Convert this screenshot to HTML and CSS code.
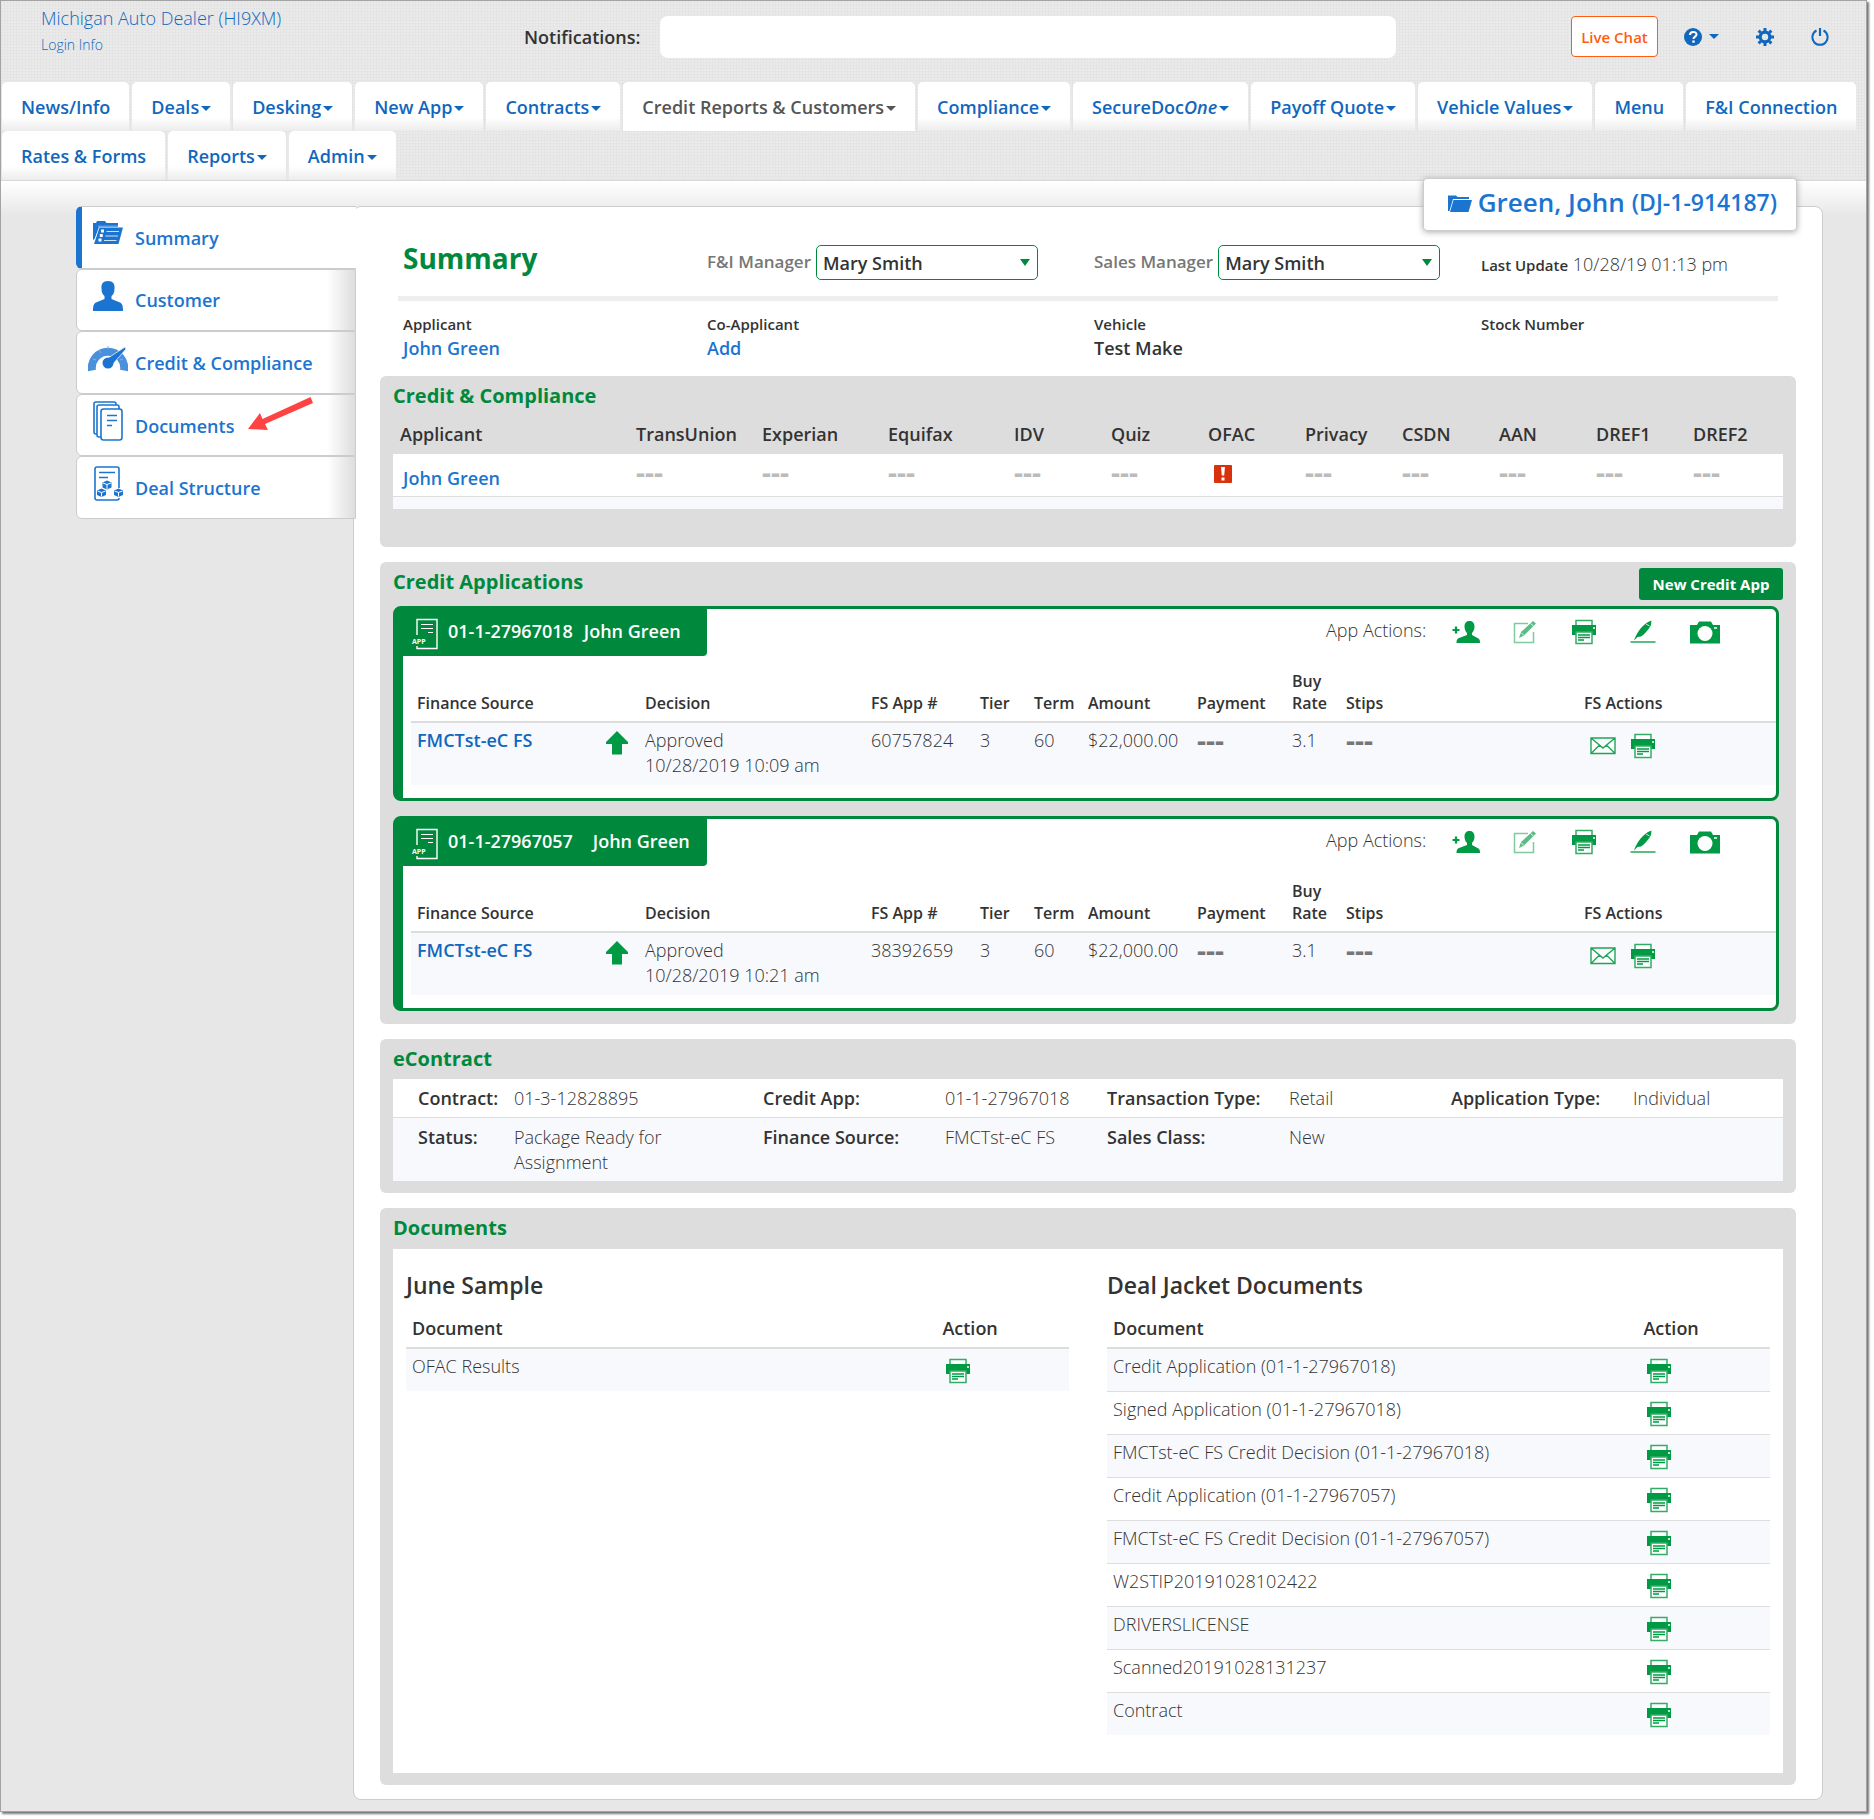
FILE: index.html
```html
<!DOCTYPE html>
<html lang="en">
<head>
  <meta charset="UTF-8">
  <title>Deal Jacket - Summary</title>
  <link rel="stylesheet" href="styles.css">
</head>
<body>
  <!-- Icon set -->
  <svg class="sprite" aria-hidden="true">
    <symbol id="i-printer" viewBox="0 0 26 26">
      <path d="M5 7V1.500h16V7" fill="#fff" stroke="#33ad66" stroke-width="1.500"/>
      <path d="M1 6h24v10h-4v-3H5v3H1z" fill="#009a44"/>
      <path d="M22 8h2v2h-2z" fill="#bfe6cf"/>
      <path d="M5 13h16v11.500H5z" fill="#fff" stroke="#33ad66" stroke-width="1.500"/>
      <path d="M7 16h12M7 18.500h12M7 21h6" stroke="#009a44" stroke-width="1.300"/>
    </symbol>
    <symbol id="i-adduser" viewBox="0 0 28 24">
      <path d="M17.500 1c-3 0-5 2-5 5.500 0 3 1 5 2.500 6.500v2L7 18c-2 1-2.500 2-2.500 5H28c0-3-.5-4-2.500-5l-5.500-3v-2c1.500-1.500 2.500-3.500 2.500-6.500C22.500 3 20.500 1 17.500 1z" fill="#009a44"/>
      <path d="M4 6.500v7M.5 10h7" stroke="#009a44" stroke-width="2.200"/>
    </symbol>
    <symbol id="i-edit" viewBox="0 0 24 24">
      <path d="M15 3.500H1.500v19h19V12" fill="none" stroke="#7fcb9f" stroke-width="1.500"/>
      <path d="M6 18l2-6L20 1l3 2.500L11 15.500z" fill="#5cbc85"/>
      <path d="M8 12.500l3 3M17.500 3.500l3 2.500" stroke="#fff" stroke-width=".8"/>
    </symbol>
    <symbol id="i-sign" viewBox="0 0 26 24">
      <path d="M.5 22h25" stroke="#33ad66" stroke-width="1.600"/>
      <path d="M4 20.500C6 15 10 7 18 2l3.500-1.500L21 5c-2 4-6 9-10 11.500l-3.500.5z" fill="#009a44"/>
      <path d="M16 4l3.500 2" stroke="#fff" stroke-width=".8" fill="none"/>
    </symbol>
    <symbol id="i-camera" viewBox="0 0 30 23">
      <path d="M0 4h7l2-3.500h12L23 4h7v18.500H0z" fill="#009a44"/>
      <circle cx="15" cy="12.500" r="7.500" fill="#fff"/>
      <path d="M24 7h3" stroke="#fff" stroke-width="1.500"/>
    </symbol>
    <symbol id="i-mail" viewBox="0 0 26 18">
      <path d="M1 1h24v15.500H1zM1 1l12 10L25 1M1 16.500L9.500 8M25 16.500L16.500 8" fill="#fff" stroke="#1fa558" stroke-width="1.400"/>
    </symbol>
    <symbol id="i-up" viewBox="0 0 22 24">
      <path d="M11 0l11 11v2h-6v10.500H6V13H0v-2z" fill="#009a44"/>
    </symbol>
    <symbol id="i-app" viewBox="0 0 28 32">
      <path d="M6 17V1.500h20v29H6V28" fill="none" stroke="#fff" stroke-width="1.400"/>
      <path d="M10 6.500h12M10 10.500h12M17 14.500h5" stroke="#fff" stroke-width="1.200"/>
      <text x="1" y="26" fill="#fff" font-size="7" font-weight="700">APP</text>
    </symbol>
    <symbol id="i-alert" viewBox="0 0 18 18">
      <rect width="18" height="18" rx="1" fill="#d9310b"/>
      <path d="M7 2h4l-.8 8.500H7.800zM7.500 12.500h3v3h-3z" fill="#fff"/>
    </symbol>
    <symbol id="i-folder" viewBox="0 0 24 18">
      <path d="M0 17V1.500h8L9.500 3H21v2H5L1.500 17z" fill="#1b75d0"/>
      <path d="M5.500 6H24l-3.500 12H2z" fill="#1b75d0"/>
    </symbol>
    <symbol id="i-help" viewBox="0 0 18 18">
      <circle cx="9" cy="9" r="9" fill="#1167bd"/>
      <path d="M6 7c0-4 6.500-4 6.500-.5 0 2.200-3 2-3 4.500" fill="none" stroke="#fff" stroke-width="2"/>
      <path d="M8.300 12.500h2.400v2.200H8.300z" fill="#fff"/>
    </symbol>
    <symbol id="i-gear" viewBox="0 0 18 18">
      <circle cx="9" cy="9" r="4.800" fill="none" stroke="#1167bd" stroke-width="3.200"/>
      <path d="M9 0v3M9 15v3M0 9h3M15 9h3M2.600 2.600l2.200 2.200M13.200 13.200l2.200 2.200M15.400 2.600l-2.200 2.200M4.800 13.200l-2.200 2.200" stroke="#1167bd" stroke-width="3"/>
    </symbol>
    <symbol id="i-power" viewBox="0 0 18 18">
      <path d="M5.500 2.500a7.600 7.600 0 1 0 7 0" fill="none" stroke="#1167bd" stroke-width="2"/>
      <path d="M9 0v8" stroke="#1167bd" stroke-width="2.200"/>
    </symbol>
    <symbol id="i-summary" viewBox="0 0 32 24">
      <path d="M1 19V2h3l1-2h8l1.500 2H26v4H7L2.500 18z" fill="#1b75d0"/>
      <path d="M7.500 6.500H31L26.500 23H2z" fill="#1b75d0"/>
      <path d="M6 5.200h20" stroke="#8dbae7" stroke-width="1"/>
      <path d="M9 10h3M7.800 14.500h3M6.500 19h3" stroke="#fff" stroke-width="3"/>
      <path d="M14.500 10.500H27M13.300 15H26M12 19.500h12.500" stroke="#cfe2f5" stroke-width="1.200"/>
    </symbol>
    <symbol id="i-user" viewBox="0 0 30 30">
      <path d="M15 0c-5 0-7 3-6.500 7.500C8.500 11 9.500 13.500 11.500 15v3L3 21.500C.5 23 0 25 0 30h30c0-5-.5-7-3-8.500L18.500 18v-3c2-1.500 3-4 3-7.500C22 3 20 0 15 0z" fill="#1b75d0"/>
    </symbol>
    <symbol id="i-gauge" viewBox="0 0 40 30">
      <path d="M4 27.500A16.200 16.200 0 1 1 36 27.500" fill="none" stroke="#4a90db" stroke-width="8"/>
      <path d="M5 16l3 1M11 7l2 3M20 3v3M35 16l-3 1" stroke="#7fb1e6" stroke-width="1"/>
      <path d="M17 17L37 4l1 2-14 16z" fill="#1b75d0" stroke="#fff" stroke-width=".7"/>
      <circle cx="20" cy="20" r="5.500" fill="#1b75d0"/>
    </symbol>
    <symbol id="i-docs" viewBox="0 0 30 40">
      <g fill="#fff" stroke="#1b75d0" stroke-width="1.600">
        <rect x="1" y="1" width="22" height="32" rx="2"/>
        <rect x="4" y="4" width="22" height="32" rx="2"/>
        <rect x="8" y="8" width="21" height="31" rx="2.500"/>
      </g>
      <path d="M14 14.500h10M14 19.500h10M14 24.500h5" stroke="#1b75d0" stroke-width="1.500"/>
    </symbol>
    <symbol id="i-deal" viewBox="0 0 30 36">
      <path d="M26 22V3q0-2-2-2H4Q2 1 2 3v29q0 2 2 2h20q2 0 2-2" fill="#fff" stroke="#1b75d0" stroke-width="1.600"/>
      <path d="M6 6.500h16M6 11.500h9" stroke="#1b75d0" stroke-width="1.500"/>
      <g fill="#1b75d0">
        <path d="M14 14.500l4.500 2v5l-4.500 2-4.500-2v-5zM8.500 22.500l4.500 2v4.500l-4.500 2-4.500-2v-4.500zM25.500 22.500l4.500 2v4.500l-4.500 2-4.500-2v-4.500z"/>
      </g>
      <path d="M10 17l4 1.500 4-1.500M14 18.500v4.500M4.500 25l4 1.500 4-1.500M8.500 26.500v4M21.500 25l4 1.500 4-1.500M25.500 26.500v4" fill="none" stroke="#fff" stroke-width="1"/>
    </symbol>
  </svg>

  <div class="page">
    <header class="header">
      <div class="topbar">
        <div class="dealer">
          <a href="#" class="dealer-name">Michigan Auto Dealer (HI9XM)</a>
          <a href="#" class="login-info">Login Info</a>
        </div>
        <div class="notifications">
          <label for="notifications">Notifications:</label>
          <input id="notifications" type="text" readonly>
        </div>
        <div class="tools">
          <button class="live-chat" type="button">Live Chat</button>
          <button class="tool caret" type="button" aria-label="Help"><svg width="18" height="18"><use href="#i-help"/></svg></button>
          <button class="tool" type="button" aria-label="Settings"><svg width="18" height="18"><use href="#i-gear"/></svg></button>
          <button class="tool" type="button" aria-label="Log out"><svg width="18" height="18"><use href="#i-power"/></svg></button>
        </div>
      </div>

      <nav class="tabs">
        <a href="#">News/Info</a>
        <a href="#" class="caret">Deals</a>
        <a href="#" class="caret">Desking</a>
        <a href="#" class="caret">New App</a>
        <a href="#" class="caret">Contracts</a>
        <a href="#" class="caret active">Credit Reports &amp; Customers</a>
        <a href="#" class="caret">Compliance</a>
        <a href="#" class="caret">SecureDoc<i>One</i></a>
        <a href="#" class="caret">Payoff Quote</a>
        <a href="#" class="caret">Vehicle Values</a>
        <a href="#">Menu</a>
        <a href="#">F&amp;I Connection</a>
        <a href="#">Rates &amp; Forms</a>
        <a href="#" class="caret">Reports</a>
        <a href="#" class="caret">Admin</a>
      </nav>
    </header>

    <div class="content">
      <nav class="sidebar">
        <a href="#" class="side-item active"><span class="side-icon"><svg width="32" height="24"><use href="#i-summary"/></svg></span>Summary</a>
        <a href="#" class="side-item"><span class="side-icon"><svg width="30" height="30"><use href="#i-user"/></svg></span>Customer</a>
        <a href="#" class="side-item"><span class="side-icon"><svg width="40" height="30"><use href="#i-gauge"/></svg></span>Credit &amp; Compliance</a>
        <a href="#" class="side-item"><span class="side-icon"><svg width="30" height="40"><use href="#i-docs"/></svg></span>Documents
          <svg class="pointer" width="66" height="34" viewBox="0 0 66 34"><path d="M0 32l12-16 2.500 6L62.500 0 65 6 17 27l3 6z" fill="#ff4343"/></svg>
        </a>
        <a href="#" class="side-item"><span class="side-icon"><svg width="30" height="36"><use href="#i-deal"/></svg></span>Deal Structure</a>
      </nav>

      <main class="jacket">
        <a href="#" class="jacket-name"><svg width="24" height="18"><use href="#i-folder"/></svg>Green, John <span>(DJ-1-914187)</span></a>

        <div class="summary-row">
          <h1>Summary</h1>
          <div class="field">
            <label for="fi-manager">F&amp;I Manager</label>
            <span class="select"><select id="fi-manager"><option>Mary Smith</option></select></span>
          </div>
          <div class="field">
            <label for="sales-manager">Sales Manager</label>
            <span class="select"><select id="sales-manager"><option>Mary Smith</option></select></span>
          </div>
          <div class="updated"><b>Last Update</b> 10/28/19 01:13 pm</div>
        </div>

        <div class="info-row">
          <div><b>Applicant</b><a href="#">John Green</a></div>
          <div><b>Co-Applicant</b><a href="#">Add</a></div>
          <div><b>Vehicle</b><span>Test Make</span></div>
          <div><b>Stock Number</b></div>
        </div>

        <!-- Credit & Compliance -->
        <section class="panel compliance">
          <h2>Credit &amp; Compliance</h2>
          <table class="compliance-table">
            <colgroup>
              <col class="c-name"><col class="c-bureau"><col class="c-bureau"><col class="c-bureau"><col class="c-check"><col class="c-check"><col class="c-check"><col class="c-check"><col class="c-check"><col class="c-check"><col class="c-check"><col class="c-check">
            </colgroup>
            <thead>
              <tr><th>Applicant</th><th>TransUnion</th><th>Experian</th><th>Equifax</th><th>IDV</th><th>Quiz</th><th>OFAC</th><th>Privacy</th><th>CSDN</th><th>AAN</th><th>DREF1</th><th>DREF2</th></tr>
            </thead>
            <tbody>
              <tr><td><a href="#">John Green</a></td><td>---</td><td>---</td><td>---</td><td>---</td><td>---</td><td><svg class="alert" width="18" height="18"><use href="#i-alert"/></svg></td><td>---</td><td>---</td><td>---</td><td>---</td><td>---</td></tr>
              <tr class="spacer"><td colspan="12"></td></tr>
            </tbody>
          </table>
        </section>

        <!-- Credit Applications -->
        <section class="panel apps">
          <div class="panel-head">
            <h2>Credit Applications</h2>
            <button class="new-app" type="button">New Credit App</button>
          </div>

          <article class="app">
            <div class="app-head">
              <div class="app-title"><svg width="28" height="32"><use href="#i-app"/></svg><b>01-1-27967018</b><span>John Green</span></div>
              <div class="app-actions">
                <span>App Actions:</span>
                <button type="button" aria-label="Add co-applicant"><svg width="28" height="24"><use href="#i-adduser"/></svg></button>
                <button type="button" aria-label="Edit"><svg width="24" height="24"><use href="#i-edit"/></svg></button>
                <button type="button" aria-label="Print"><svg width="26" height="26"><use href="#i-printer"/></svg></button>
                <button type="button" aria-label="Sign"><svg width="26" height="24"><use href="#i-sign"/></svg></button>
                <button type="button" aria-label="Scan"><svg width="30" height="23"><use href="#i-camera"/></svg></button>
              </div>
            </div>
            <table class="app-table">
              <colgroup><col class="a-source"><col class="a-arrow"><col class="a-decision"><col class="a-num"><col class="a-tier"><col class="a-tier"><col class="a-amount"><col class="a-pay"><col class="a-tier"><col class="a-stips"><col></colgroup>
              <thead>
                <tr><th>Finance Source</th><th></th><th>Decision</th><th>FS App #</th><th>Tier</th><th>Term</th><th>Amount</th><th>Payment</th><th>Buy<br>Rate</th><th>Stips</th><th>FS Actions</th></tr>
              </thead>
              <tbody>
                <tr>
                  <td><a href="#">FMCTst-eC FS</a></td>
                  <td><svg class="up" width="22" height="24"><use href="#i-up"/></svg></td>
                  <td>Approved<br>10/28/2019 10:09 am</td>
                  <td>60757824</td><td>3</td><td>60</td><td>$22,000.00</td><td class="none">---</td><td>3.1</td><td class="none">---</td>
                  <td>
                    <div class="fs-actions">
                      <button type="button" aria-label="Message"><svg width="26" height="18"><use href="#i-mail"/></svg></button>
                      <button type="button" aria-label="Print"><svg width="26" height="26"><use href="#i-printer"/></svg></button>
                    </div>
                  </td>
                </tr>
              </tbody>
            </table>
          </article>

          <article class="app">
            <div class="app-head">
              <div class="app-title wide"><svg width="28" height="32"><use href="#i-app"/></svg><b>01-1-27967057</b><span>John Green</span></div>
              <div class="app-actions">
                <span>App Actions:</span>
                <button type="button" aria-label="Add co-applicant"><svg width="28" height="24"><use href="#i-adduser"/></svg></button>
                <button type="button" aria-label="Edit"><svg width="24" height="24"><use href="#i-edit"/></svg></button>
                <button type="button" aria-label="Print"><svg width="26" height="26"><use href="#i-printer"/></svg></button>
                <button type="button" aria-label="Sign"><svg width="26" height="24"><use href="#i-sign"/></svg></button>
                <button type="button" aria-label="Scan"><svg width="30" height="23"><use href="#i-camera"/></svg></button>
              </div>
            </div>
            <table class="app-table">
              <colgroup><col class="a-source"><col class="a-arrow"><col class="a-decision"><col class="a-num"><col class="a-tier"><col class="a-tier"><col class="a-amount"><col class="a-pay"><col class="a-tier"><col class="a-stips"><col></colgroup>
              <thead>
                <tr><th>Finance Source</th><th></th><th>Decision</th><th>FS App #</th><th>Tier</th><th>Term</th><th>Amount</th><th>Payment</th><th>Buy<br>Rate</th><th>Stips</th><th>FS Actions</th></tr>
              </thead>
              <tbody>
                <tr>
                  <td><a href="#">FMCTst-eC FS</a></td>
                  <td><svg class="up" width="22" height="24"><use href="#i-up"/></svg></td>
                  <td>Approved<br>10/28/2019 10:21 am</td>
                  <td>38392659</td><td>3</td><td>60</td><td>$22,000.00</td><td class="none">---</td><td>3.1</td><td class="none">---</td>
                  <td>
                    <div class="fs-actions">
                      <button type="button" aria-label="Message"><svg width="26" height="18"><use href="#i-mail"/></svg></button>
                      <button type="button" aria-label="Print"><svg width="26" height="26"><use href="#i-printer"/></svg></button>
                    </div>
                  </td>
                </tr>
              </tbody>
            </table>
          </article>
        </section>

        <!-- eContract -->
        <section class="panel econtract">
          <h2>eContract</h2>
          <table class="contract-table">
            <colgroup><col class="e-first"><col class="e-wide"><col class="e-label"><col class="e-value"><col class="e-label"><col class="e-value"><col class="e-label"><col></colgroup>
            <tr><th>Contract:</th><td>01-3-12828895</td><th>Credit App:</th><td>01-1-27967018</td><th>Transaction Type:</th><td>Retail</td><th>Application Type:</th><td>Individual</td></tr>
            <tr><th>Status:</th><td>Package Ready for Assignment</td><th>Finance Source:</th><td>FMCTst-eC FS</td><th>Sales Class:</th><td>New</td><th></th><td></td></tr>
          </table>
        </section>

        <!-- Documents -->
        <section class="panel documents">
          <h2>Documents</h2>
          <div class="docs">
            <div>
              <h3>June Sample</h3>
              <table class="doc-table">
                <thead><tr><th>Document</th><th class="act">Action</th></tr></thead>
                <tbody>
                  <tr><td>OFAC Results</td><td><button type="button" aria-label="Print"><svg width="26" height="26"><use href="#i-printer"/></svg></button></td></tr>
                </tbody>
              </table>
            </div>
            <div>
              <h3>Deal Jacket Documents</h3>
              <table class="doc-table">
                <thead><tr><th>Document</th><th class="act">Action</th></tr></thead>
                <tbody>
                  <tr><td>Credit Application (01-1-27967018)</td><td><button type="button" aria-label="Print"><svg width="26" height="26"><use href="#i-printer"/></svg></button></td></tr>
                  <tr><td>Signed Application (01-1-27967018)</td><td><button type="button" aria-label="Print"><svg width="26" height="26"><use href="#i-printer"/></svg></button></td></tr>
                  <tr><td>FMCTst-eC FS Credit Decision (01-1-27967018)</td><td><button type="button" aria-label="Print"><svg width="26" height="26"><use href="#i-printer"/></svg></button></td></tr>
                  <tr><td>Credit Application (01-1-27967057)</td><td><button type="button" aria-label="Print"><svg width="26" height="26"><use href="#i-printer"/></svg></button></td></tr>
                  <tr><td>FMCTst-eC FS Credit Decision (01-1-27967057)</td><td><button type="button" aria-label="Print"><svg width="26" height="26"><use href="#i-printer"/></svg></button></td></tr>
                  <tr><td>W2STIP20191028102422</td><td><button type="button" aria-label="Print"><svg width="26" height="26"><use href="#i-printer"/></svg></button></td></tr>
                  <tr><td>DRIVERSLICENSE</td><td><button type="button" aria-label="Print"><svg width="26" height="26"><use href="#i-printer"/></svg></button></td></tr>
                  <tr><td>Scanned20191028131237</td><td><button type="button" aria-label="Print"><svg width="26" height="26"><use href="#i-printer"/></svg></button></td></tr>
                  <tr><td>Contract</td><td><button type="button" aria-label="Print"><svg width="26" height="26"><use href="#i-printer"/></svg></button></td></tr>
                </tbody>
              </table>
            </div>
          </div>
        </section>
      </main>
    </div>
  </div>
</body>
</html>
```
FILE: styles.css
```css
* {
  box-sizing: border-box;
}

body {
  margin: 0;
  padding: 0 7px 7px 0;
  background: #fff;
  color: #333;
  font-family: "Open Sans", sans-serif;
  font-size: 18px;
  font-weight: 300;
  line-height: 25px;
}

a {
  color: #1b75d0;
  text-decoration: none;
}

h1, h2, h3 {
  margin: 0;
}

button {
  padding: 0;
  border: 0;
  background: none;
  font-family: inherit;
  cursor: pointer;
}

svg {
  display: block;
  flex: none;
}

table {
  width: 100%;
  border-collapse: collapse;
  table-layout: fixed;
}

th, td {
  padding: 0;
  text-align: left;
  vertical-align: top;
}

th {
  font-weight: 600;
}

td a {
  font-weight: 600;
}

.sprite {
  display: none;
}

.page {
  border: 1px solid #a3a3a3;
  background: #e7e7e7;
  box-shadow: 2px 2px 2px #777;
}

/* Header */
.header {
  border-bottom: 1px solid #d8d8d8;
  background:
    repeating-linear-gradient(0deg, rgba(0, 0, 0, 0.02) 0 1px, transparent 1px 3px),
    repeating-linear-gradient(90deg, rgba(0, 0, 0, 0.02) 0 1px, transparent 1px 3px),
    #eaeaea;
}

.topbar {
  display: flex;
  justify-content: space-between;
  height: 81px;
  padding: 0 37px 0 40px;
}

.dealer {
  display: flex;
  flex-direction: column;
  width: 483px;
  padding-top: 5px;
}

.dealer a {
  color: #1167bd;
}

.dealer .login-info {
  font-size: 14px;
  line-height: 27px;
}

.notifications {
  display: flex;
  flex: 1;
  gap: 20px;
  padding-top: 15px;
}

.notifications label {
  font-weight: 600;
  line-height: 42px;
}

.notifications input {
  flex: 1;
  height: 42px;
  border: 0;
  border-radius: 8px;
  background: #fff;
}

.tools {
  display: flex;
  align-items: flex-start;
  margin-left: 175px;
  padding-top: 15px;
}

.live-chat {
  width: 87px;
  height: 41px;
  border: 1px solid #ff5c10;
  border-radius: 4px;
  background: #fff;
  color: #ff5c10;
  font-size: 15px;
  font-weight: 600;
}

.tool {
  display: flex;
  align-items: center;
  height: 41px;
  margin-left: 37px;
  color: #1167bd;
}

.tool.caret {
  margin-left: 26px;
}

.caret::after {
  content: "";
  display: inline-block;
  margin-left: 2px;
  border: 5px solid transparent;
  border-top-color: currentColor;
  border-bottom: 0;
  vertical-align: 3px;
}

.tool.caret::after {
  margin-left: 7px;
}

.tabs {
  display: flex;
  flex-wrap: wrap;
  column-gap: 3px;
  padding-left: 1px;
}

.tabs a {
  height: 49px;
  padding: 13px 19px 0;
  border-radius: 5px 5px 0 0;
  background: linear-gradient(#fff 72%, #ececec);
  color: #1167bd;
  font-weight: 600;
}

.tabs a.active {
  background: #fff;
  color: #555;
}

/* Content */
.content {
  display: flex;
  align-items: flex-start;
  padding: 25px 43px 11px 75px;
  background: linear-gradient(#fff, #e7e7e7 35px);
}

.sidebar {
  display: grid;
  grid-auto-rows: 1fr;
  position: relative;
  z-index: 1;
  flex: none;
  width: 280px;
  height: 313px;
  margin-right: -3px;
}

.side-item {
  display: flex;
  position: relative;
  align-items: center;
  padding: 2px 0 0 11px;
  border: 1px solid #ccc;
  border-radius: 6px 0 0 6px;
  background: linear-gradient(90deg, #fff 90%, #ddd);
  font-weight: 600;
}

.side-item.active {
  padding-left: 6px;
  border-right: 0;
  border-left: 6px solid #1b75d0;
  background: #fff;
}

.side-icon {
  display: flex;
  justify-content: center;
  width: 40px;
  margin: 0 7px 10px 0;
}

.pointer {
  position: absolute;
  top: 2px;
  left: 171px;
}

.jacket {
  position: relative;
  flex: 1;
  min-width: 0;
  padding: 0 26px 14px;
  border: 1px solid #ccc;
  border-radius: 8px;
  background: #fff;
}

.jacket-name {
  display: flex;
  position: absolute;
  top: -29px;
  right: 25px;
  align-items: center;
  height: 53px;
  padding: 0 19px 4px 24px;
  border: 1px solid #ccc;
  border-radius: 4px;
  background: #fff;
  box-shadow: 0 1px 6px #aaa;
  font-size: 26px;
  font-weight: 600;
}

.jacket-name svg {
  margin-right: 6px;
}

.jacket-name span {
  margin-left: 7px;
  font-size: 23px;
}

.summary-row, .info-row {
  display: grid;
  grid-template-columns: 304fr 387fr 387fr 297fr;
  margin: 0 18px;
  padding-left: 5px;
}

.summary-row {
  align-items: start;
  height: 94px;
  padding-top: 38px;
  border-bottom: 5px solid #eee;
}

h1 {
  color: #00893d;
  font-size: 28px;
  line-height: 27px;
}

.field {
  display: flex;
  gap: 5px;
}

.field label {
  color: #777;
  font-size: 17px;
  font-weight: 600;
  line-height: 34px;
}

.select {
  position: relative;
}

.select::after {
  content: "";
  position: absolute;
  top: 14px;
  right: 8px;
  border: 5px solid transparent;
  border-top: 7px solid #00893d;
  border-bottom: 0;
}

.select select {
  width: 222px;
  height: 35px;
  padding: 0 6px;
  border: 1px solid #00893d;
  border-radius: 5px;
  appearance: none;
  background: #fff;
  color: #333;
  font-family: inherit;
  font-size: 18px;
  font-weight: 600;
}

.updated {
  line-height: 38px;
}

.updated b {
  font-size: 15px;
  font-weight: 600;
}

.info-row {
  height: 75px;
  padding-top: 11px;
  font-weight: 600;
}

.info-row b {
  display: block;
  font-size: 15px;
  font-weight: 600;
  line-height: 24px;
}

/* Panels */
.panel {
  margin-bottom: 15px;
  padding: 0 13px 12px;
  border-radius: 6px;
  background: #ddd;
}

.panel:last-child {
  margin-bottom: 0;
}

h2 {
  padding-top: 7px;
  color: #00893d;
  font-size: 20px;
  line-height: 25px;
}

.compliance {
  height: 171px;
}

.compliance-table {
  margin-top: 13px;
}

.compliance-table th, .compliance-table td {
  padding: 1px 0 0 7px;
}

.compliance-table thead tr {
  height: 33px;
}

.compliance-table tbody tr {
  height: 42px;
  border-bottom: 1px solid #ddd;
  background: #fff;
}

.compliance-table tbody td {
  padding-top: 6px;
  color: #bbb;
  font-size: 28px;
  font-weight: 700;
}

.compliance-table tbody td:first-child {
  padding: 12px 0 0 10px;
  font-size: 18px;
}

.compliance-table tbody .spacer {
  height: 13px;
  border: 0;
  background: #f8f9fd;
}

.compliance-table tbody .spacer td {
  padding: 0;
}

.alert {
  margin: 5px 0 0 6px;
}

.c-name {
  width: 236px;
}

.c-bureau {
  width: 126px;
}

.c-check {
  width: 97px;
}

.apps {
  padding-bottom: 13px;
}

.panel-head {
  display: flex;
  justify-content: space-between;
  height: 44px;
}

.new-app {
  width: 144px;
  height: 32px;
  margin-top: 6px;
  border-radius: 3px;
  background: #00893d;
  color: #fff;
  font-size: 15px;
  font-weight: 700;
}

.app {
  height: 195px;
  margin: 0 4px 15px 0;
  border: 3px solid #00893d;
  border-left-width: 10px;
  border-radius: 8px;
  background: #fff;
}

.app:last-child {
  margin-bottom: 0;
}

.app-head {
  display: flex;
  justify-content: space-between;
}

.app-title {
  display: flex;
  align-items: center;
  width: 304px;
  height: 47px;
  padding: 0 0 2px 8px;
  border-radius: 0 0 4px;
  background: #00893d;
  color: #fff;
  font-weight: 600;
}

.app-title b {
  font-weight: 600;
}

.app-title svg {
  margin: 5px 9px 0 0;
}

.app-title span {
  margin-left: 11px;
}

.app-title.wide span {
  margin-left: 20px;
}

.app-actions {
  display: flex;
  align-items: center;
  justify-content: space-between;
  width: 394px;
  height: 46px;
  margin-right: 56px;
}

.app-actions span {
  margin: 0 -8px 4px 0;
}

.app-table {
  width: calc(100% - 8px);
  margin-left: 8px;
}

.app-table th {
  height: 66px;
  padding: 0 0 7px 6px;
  border-bottom: 2px solid #ddd;
  font-size: 16px;
  line-height: 22px;
  vertical-align: bottom;
}

.app-table td {
  height: 63px;
  padding: 5px 0 0 6px;
  background: #f8f9fd;
}

.app-table td a {
  color: #1167bd;
}

.app-table .none {
  color: #777;
  font-size: 28px;
  font-weight: 700;
}

.up {
  margin-top: 3px;
}

.fs-actions {
  display: flex;
  align-items: center;
  gap: 14px;
  padding: 5px 0 0 6px;
}

.a-source {
  width: 189px;
}

.a-arrow {
  width: 39px;
}

.a-decision {
  width: 226px;
}

.a-num, .a-amount {
  width: 109px;
}

.a-tier {
  width: 54px;
}

.a-pay {
  width: 95px;
}

.a-stips {
  width: 238px;
}

.contract-table {
  margin-top: 8px;
  background: #fff;
}

.contract-table th, .contract-table td {
  padding: 7px 24px 6px 0;
}

.contract-table th {
  padding-right: 0;
}

.contract-table th:first-child {
  padding-left: 25px;
}

.contract-table tr + tr {
  height: 63px;
  border-top: 1px solid #ddd;
  background: #f8f9fd;
}

.e-first {
  width: 121px;
}

.e-wide {
  width: 249px;
}

.e-label {
  width: 182px;
}

.e-value {
  width: 162px;
}

/* Documents */
.docs {
  display: grid;
  grid-template-columns: 1fr 1fr;
  gap: 38px;
  margin-top: 9px;
  padding: 21px 13px 38px;
  background: #fff;
}

h3 {
  font-size: 23px;
  font-weight: 600;
  line-height: 30px;
}

.doc-table {
  margin-top: 8px;
  border-collapse: separate;
  border-spacing: 0;
}

.doc-table th {
  height: 41px;
  padding: 8px 0 0 6px;
  border-bottom: 2px solid #ddd;
}

.doc-table .act {
  width: 20%;
}

.doc-table td {
  height: 42px;
  padding: 5px 0 0 6px;
}

.doc-table tr + tr td {
  height: 43px;
  border-top: 1px solid #ddd;
}

.doc-table tbody tr:nth-child(odd) {
  background: #f8f9fd;
}

.doc-table td button {
  display: block;
  margin: 4px 0 0 3px;
}
```
